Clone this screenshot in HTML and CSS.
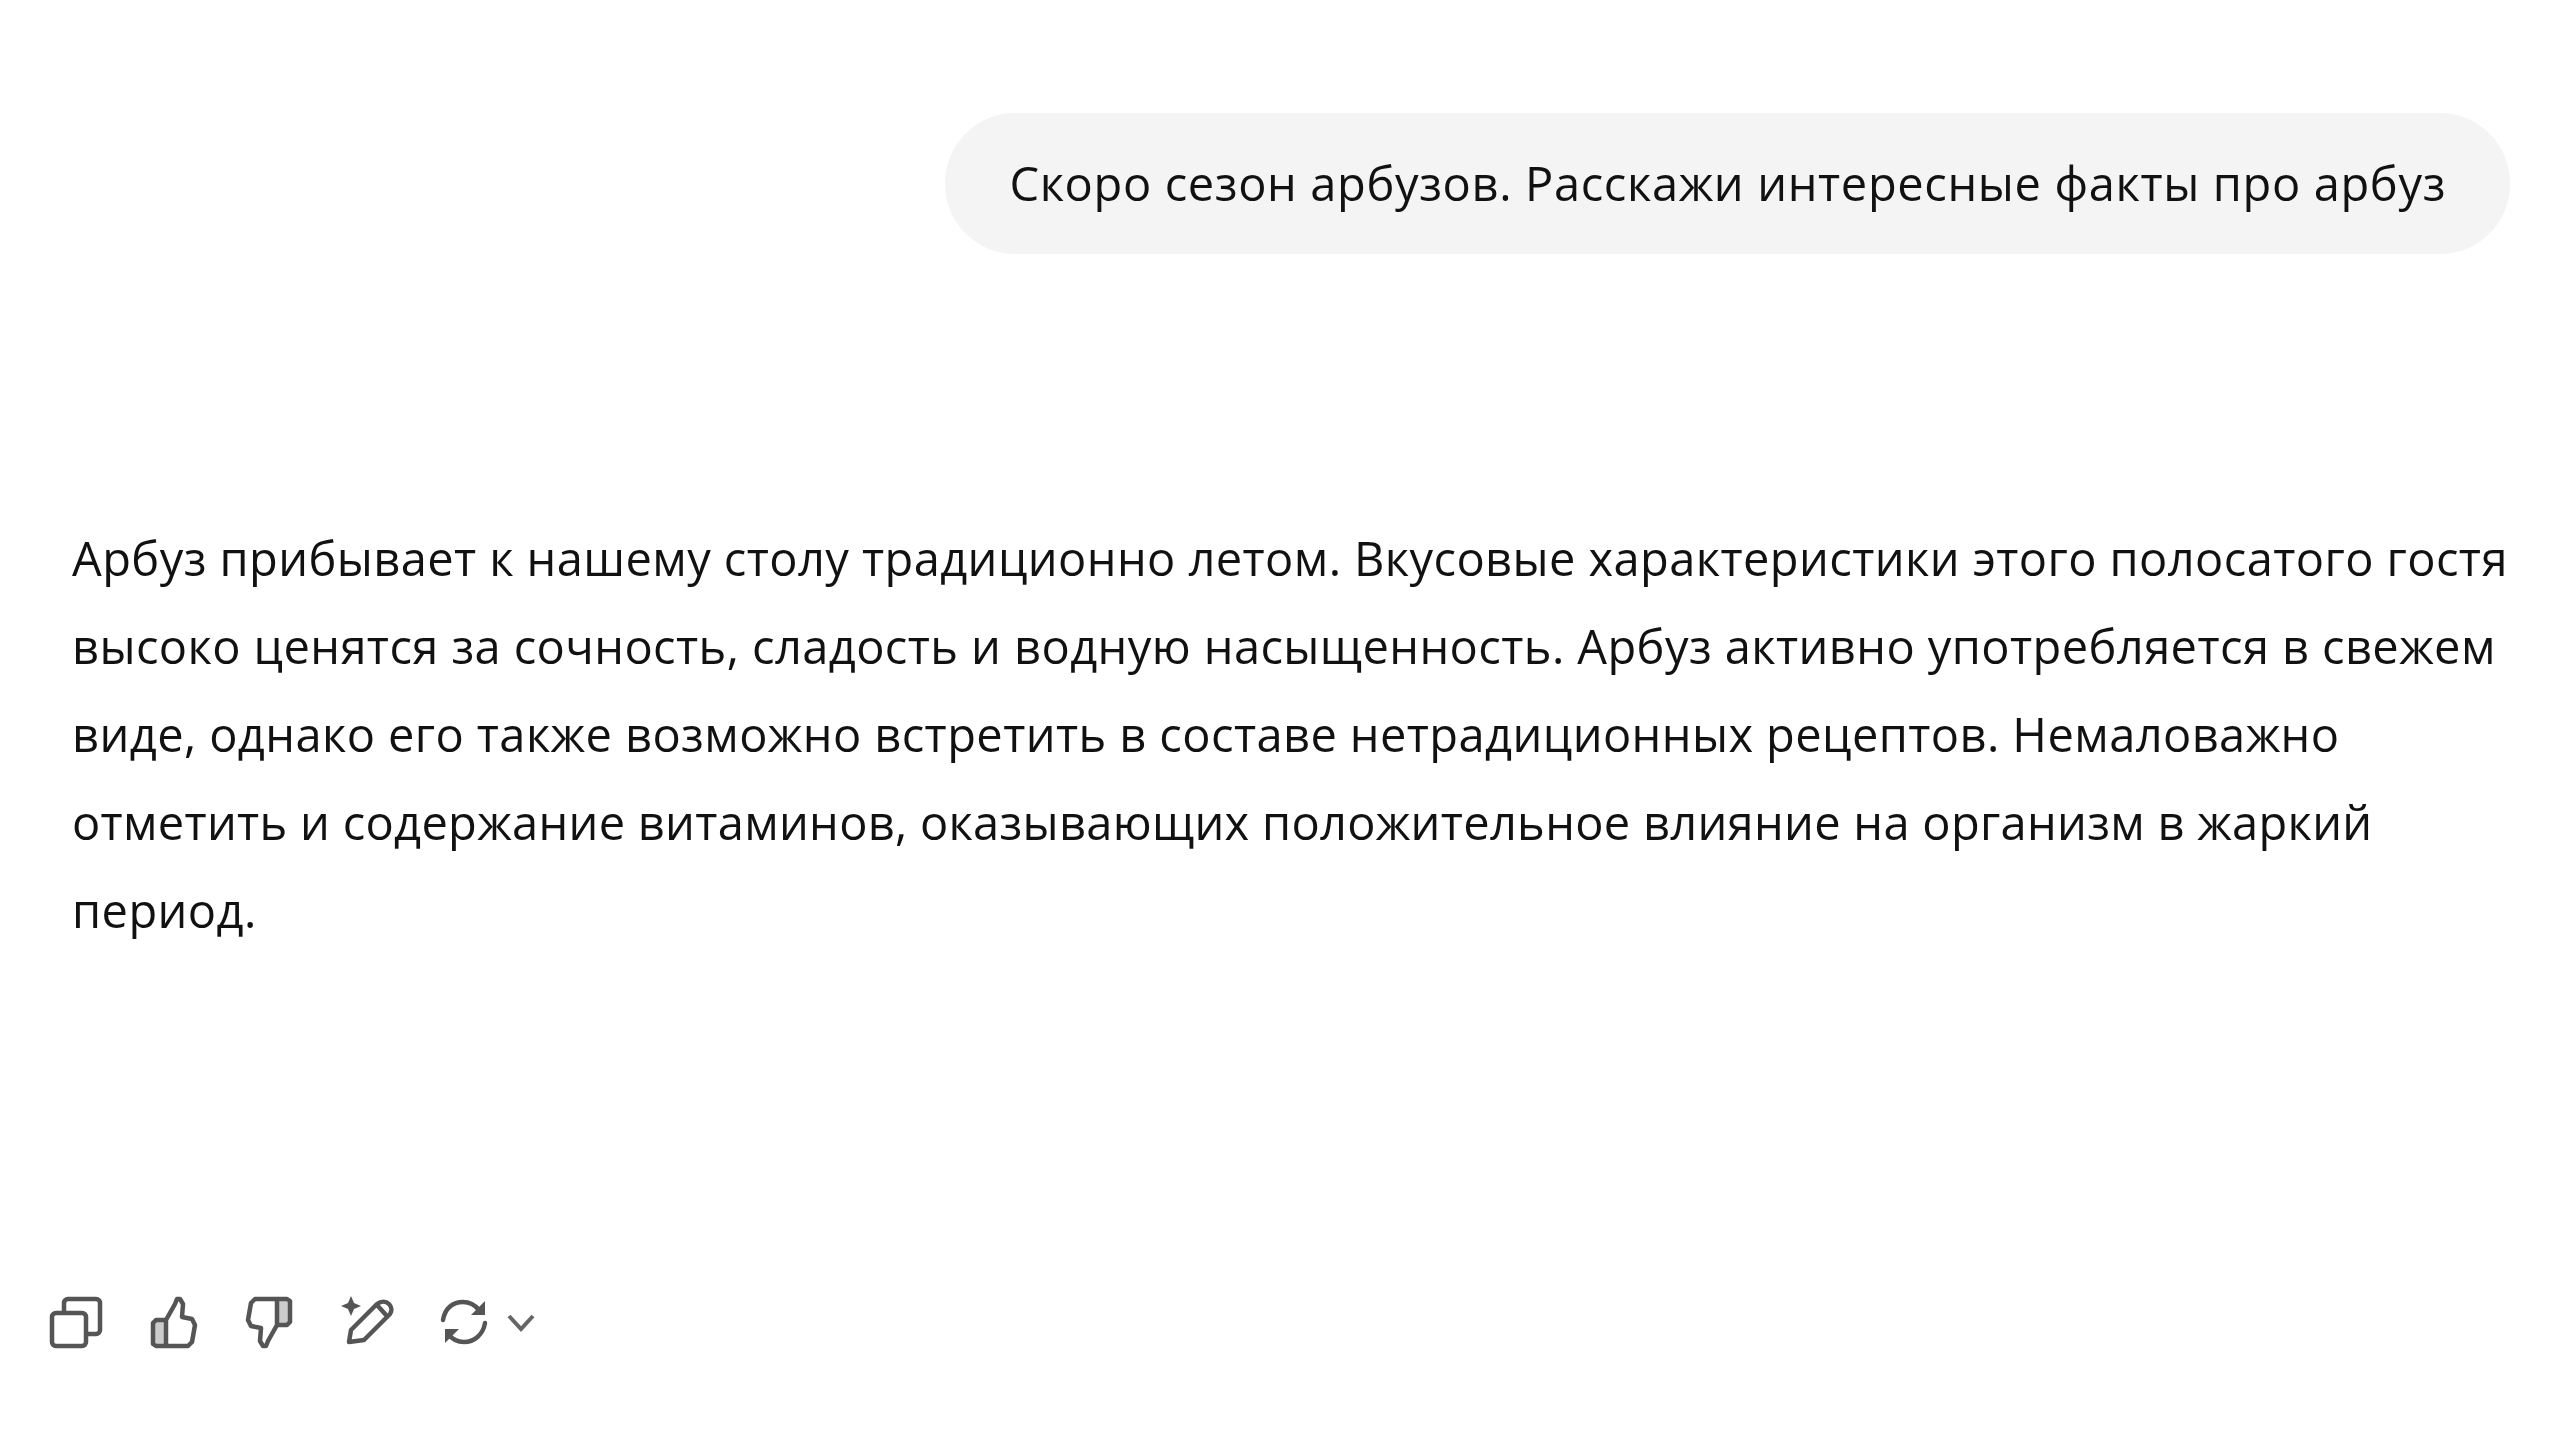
FILE: index.html
```html
<!DOCTYPE html>
<html lang="ru">
  <head>
    <meta charset="UTF-8" />
    <title>Чат</title>
    <link rel="stylesheet" href="styles.css">
  </head>
  <body>
    <div class="chat">
      <div class="user-row">
        <div class="bubble">Скоро сезон арбузов. Расскажи интересные факты про арбуз</div>
      </div>
      <p class="answer">
        Арбуз прибывает к нашему столу традиционно летом. Вкусовые характеристики этого полосатого гостя<br />
        высоко ценятся за сочность, сладость и водную насыщенность. Арбуз активно употребляется в свежем<br />
        виде, однако его также возможно встретить в составе нетрадиционных рецептов. Немаловажно<br />
        <span class="tight">отметить и содержание витаминов, оказывающих положительное влияние на организм в жаркий</span><br />
        период.
      </p>
      <div class="actions">
        <svg class="icon" viewBox="0 0 60 60">
          <path d="M19 20V11a4 4 0 0 1 4-4h28a4 4 0 0 1 4 4v27a4 4 0 0 1-4 4h-8" />
          <rect x="7" y="21" width="34" height="33" rx="4" />
        </svg>
        <svg class="icon" viewBox="0 0 60 60">
          <path class="panel" d="M11 31l3-3h10v26H14l-3-2z" />
          <path d="M24 28 33 12 35 7h3l3 5-1 13 10 2 3 6-3 17-4 4H14l-3-2V31l3-3h10v26" />
        </svg>
        <svg class="icon" viewBox="0 0 60 60">
          <g transform="rotate(180 31 30.5)">
            <path class="panel" d="M11 31l3-3h10v26H14l-3-2z" />
            <path d="M24 28 33 12 35 7h3l3 5-1 13 10 2 3 6-3 17-4 4H14l-3-2V31l3-3h10v26" />
          </g>
        </svg>
        <svg class="icon" viewBox="0 0 60 60">
          <path d="M13 50l2-12 26-26c4-3 9-3 12 0s3 7 1 10L28 48z" />
          <path d="M41 13l9 10" />
          <path class="fill" d="M15 4l3 7 7 3-7 3-3 7-3-7-7-3 7-3z" />
        </svg>
        <div class="regen">
          <svg class="icon" viewBox="0 0 60 60">
            <path d="M10 28C12 16 20 10 30 10c7 0 12 3 16 8" />
            <path class="fill" d="M52 9v14H38z" />
            <path d="M52 31c-2 12-11 19-21 19-7 0-12-3-16-8" />
            <path class="fill" d="M12 51V37h14z" />
          </svg>
          <svg class="chevron" viewBox="0 0 30 20">
            <path d="M3 4l12 13L27 4" />
          </svg>
        </div>
      </div>
    </div>
  </body>
</html>
```

FILE: styles.css
```css
* {
  padding: 0;
  margin: 0;
  box-sizing: border-box;
}

body {
  background-color: #ffffff;
  color: #111111;
  font-family: "Open Sans", "Noto Sans", sans-serif;
  font-size: 47px;
}

/* the source shot is an enlarged one, so everything is a little soft */
.chat {
  height: 1437px;
  overflow: hidden;
  padding: 113px 50px 0 72px;
  filter: blur(0.6px);
}

.user-row {
  display: flex;
  justify-content: flex-end;
}

.bubble {
  height: 141px;
  line-height: 141px;
  padding: 0 64px;
  border-radius: 70px;
  background-color: #f4f4f4;
  white-space: nowrap;
  letter-spacing: 0.64px;
}

.answer {
  margin-top: 260px;
  line-height: 88px;
  white-space: nowrap;
  letter-spacing: 0.42px;
}

.tight {
  letter-spacing: 0.3px;
}

.actions {
  margin-top: 338px;
  margin-left: -27px;
  display: flex;
  align-items: center;
  gap: 37px;
}

.icon {
  width: 60px;
  height: 60px;
  fill: none;
  stroke: #555555;
  stroke-width: 4.5;
  stroke-linejoin: round;
  stroke-linecap: round;
}

.icon .fill {
  fill: #555555;
  stroke: none;
}

.icon .panel {
  fill: #cccccc;
  stroke: none;
}

.regen {
  display: flex;
  align-items: center;
  gap: 13px;
}

.chevron {
  width: 30px;
  height: 20px;
  fill: none;
  stroke: #666666;
  stroke-width: 4;
  overflow: visible;
}
```
